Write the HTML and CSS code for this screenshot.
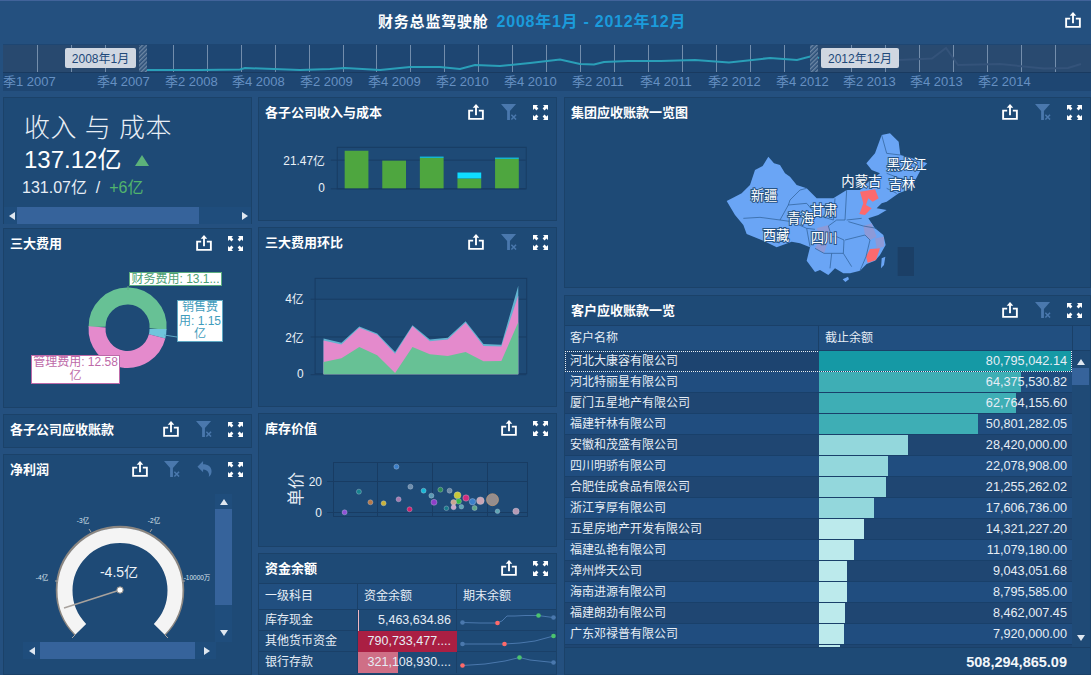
FILE: index.html
```html
<!DOCTYPE html>
<html lang="zh">
<head>
<meta charset="utf-8">
<title>财务总监驾驶舱</title>
<link rel="stylesheet" href="styles.css">
</head>
<body>
<svg class="defs" width="0" height="0">
  <defs>
    <symbol id="i-share" viewBox="0 0 17 17"><path d="M5.5 7H1.2V15.8H15.8V7H11.5M8.5 12V1.5" fill="none" stroke="#fff" stroke-width="2"/><path d="M8.5 0 12 4H5z" fill="#fff"/></symbol>
    <symbol id="i-filter" viewBox="0 0 17 17"><path d="M0 0H16L9.5 7.5V17H6.5V7.5z" fill="#4a78ad"/><path d="M11 11.5 16 16.5M16 11.5 11 16.5" stroke="#4a78ad" stroke-width="1.6"/></symbol>
    <symbol id="i-expand" viewBox="0 0 15 15"><path d="M0 0H5L3.6 1.6 5.4 3.4 3.4 5.4 1.6 3.6 0 5zM15 0H10L11.4 1.6 9.6 3.4 11.6 5.4 13.4 3.6 15 5zM0 15H5L3.6 13.4 5.4 11.6 3.4 9.6 1.6 11.4 0 10zM15 15H10L11.4 13.4 9.6 11.6 11.6 9.6 13.4 11.4 15 10z" fill="#fff"/></symbol>
    <symbol id="i-undo" viewBox="0 0 15 17"><path d="M0 6 6 0V3.5C11 3.5 15 6 15 11 15 13.5 14 15.5 12 17 13 14 12 9.5 6 9V12z" fill="#4a78ad"/></symbol>
    <pattern id="hatch" width="3" height="3" patternUnits="userSpaceOnUse" patternTransform="rotate(45)"><rect width="3" height="3" fill="#2b4f78"/><rect width="1.4" height="3" fill="#6d87a5"/></pattern>
  </defs>
</svg>
<div class="page">
  <header class="top">
    <span class="top-title">财务总监驾驶舱</span>
    <span class="top-date">2008年1月 - 2012年12月</span>
    <svg class="ico top-share"><use href="#i-share"/></svg>
  </header>

  <section class="timeline">
    <svg class="timeline-svg" viewBox="3 44 1088 47" width="1088" height="47">
      <rect x="3" y="45" width="136" height="27" fill="#28496f"/>
      <rect x="818" y="45" width="273" height="27" fill="#294a70"/>
      <g stroke="#8ea5c0" stroke-width="1" opacity=".75">
        <path d="M37.5 45V72M71.5 45V72M105.5 45V72M173.5 45V72M207.5 45V72M241.5 45V72M275.5 45V72M309.5 45V72M343.5 45V72M376.5 45V72M410.5 45V72M444.5 45V72M478.5 45V72M512.5 45V72M546.5 45V72M580.5 45V72M614.5 45V72M648.5 45V72M682.5 45V72M716.5 45V72M750.5 45V72M784.5 45V72M851.5 45V72M885.5 45V72M919.5 45V72M953.5 45V72M987.5 45V72M1021.5 45V72M1055.5 45V72"/>
      </g>
      <path d="M147 70 200 70 240 69.5 245 68 300 70 330 69 345 68 380 70 410 67 440 67 460 69 475 65 500 66 530 63 560 59.5 580 64 594 64.500 604 62 628 61 661 61 695 60 729 62.500 770 58 797 60 812 56 819 58" fill="none" stroke="#2a9fb8" stroke-width="2"/>
      <path d="M899 60 932 58.500 946 48 958 65 1000 64 1044 68.500 1068 68 1081 64" fill="none" stroke="#34537a" stroke-width="2"/>
      <rect x="139" y="45" width="8" height="27" fill="url(#hatch)"/>
      <rect x="810" y="45" width="8" height="27" fill="url(#hatch)"/>
      <rect x="65" y="48" width="71" height="20" rx="2" fill="#d0d7e1"/>
      <rect x="821" y="48" width="78" height="20" rx="2" fill="#d0d7e1"/>
      <text class="tl-tag" x="100.500" y="63" text-anchor="middle">2008年1月</text>
      <text class="tl-tag" x="860" y="63" text-anchor="middle">2012年12月</text>
      <path d="M3 72.500H1091" stroke="#193a60"/>
      <g class="tl-label">
        <text x="3" y="86">季1 2007</text><text x="97" y="86">季4 2007</text><text x="165" y="86">季2 2008</text><text x="232" y="86">季4 2008</text><text x="300" y="86">季2 2009</text><text x="368" y="86">季4 2009</text><text x="436" y="86">季2 2010</text><text x="504" y="86">季4 2010</text><text x="572" y="86">季2 2011</text><text x="640" y="86">季4 2011</text><text x="708" y="86">季2 2012</text><text x="776" y="86">季4 2012</text><text x="843" y="86">季2 2013</text><text x="910" y="86">季4 2013</text><text x="978" y="86">季2 2014</text>
      </g>
    </svg>
  </section>

  <main class="board">
    <div class="col col-a">
      <section class="panel p-income">
        <div class="income-body">
          <div class="income-head">收入 与 成本</div>
          <div class="income-main"><span>137.12亿</span><i class="tri-up"></i></div>
          <div class="income-sub">131.07亿 &nbsp;/ &nbsp;<em>+6亿</em></div>
        </div>
        <div class="hbar"><i class="arr arr-l"></i><b class="hbar-thumb income-thumb"></b><i class="arr arr-r"></i></div>
      </section>

      <section class="panel p-fee">
        <div class="title"><h2>三大费用</h2><div class="tools"><svg class="ico"><use href="#i-share"/></svg><svg class="ico exp"><use href="#i-expand"/></svg></div></div>
        <div class="fee-chart">
          <svg viewBox="4 256 247 150" width="247" height="150">
            <g fill="none" stroke-width="17">
              <path d="M97.100 324.900A30.500 30.500 0 1 1 158 327" stroke="#67c195"/>
              <path d="M158 327A30.500 30.500 0 0 1 157.100 334.400" stroke="#70c5dc"/>
              <path d="M157.100 334.400A30.500 30.500 0 0 1 97.100 324.900" stroke="#e48acc"/>
            </g>
            <path d="M128 288V284" stroke="#5cae7f"/><path d="M164 333 177 335" stroke="#5fa9c4"/>
          </svg>
          <div class="tip tip-fin">财务费用: 13.1...</div>
          <div class="tip tip-sale">销售费<br>用: 1.15<br>亿</div>
          <div class="tip tip-mgr">管理费用: 12.58<br>亿</div>
        </div>
      </section>

      <section class="panel p-ar">
        <div class="title"><h2>各子公司应收账款</h2><div class="tools"><svg class="ico"><use href="#i-share"/></svg><svg class="ico"><use href="#i-filter"/></svg><svg class="ico exp"><use href="#i-expand"/></svg></div></div>
      </section>

      <section class="panel p-profit">
        <div class="title"><h2>净利润</h2><div class="tools"><svg class="ico"><use href="#i-share"/></svg><svg class="ico"><use href="#i-filter"/></svg><svg class="ico undo"><use href="#i-undo"/></svg><svg class="ico exp"><use href="#i-expand"/></svg></div></div>
        <div class="gauge">
          <svg viewBox="4 482 247 190" width="247" height="190">
            <path d="M75.500 632.500A63 63 0 1 1 164.500 632.500" fill="none" stroke="#8b8681" stroke-width="2.500"/>
            <path d="M80.800 627.200A55 55 0 1 1 159.200 627.200" fill="none" stroke="#f4f4f4" stroke-width="15"/>
            <path d="M91 530 89 527M150 530 152 527M58 579H55M182 579H185M75 633 72 636M165 633 168 636" stroke="#a9a5a1"/>
            <g class="g-tick">
              <text x="83" y="521" text-anchor="middle">-3亿</text><text x="154" y="521" text-anchor="middle">-2亿</text><text x="42" y="578" text-anchor="middle">-4亿</text><text x="197" y="578" text-anchor="middle">-10000万</text>
            </g>
            <text class="g-val" x="119" y="575" text-anchor="middle">-4.5亿</text>
            <path d="M120 588 64 606" stroke="#a8a29d" stroke-width="1.500"/>
            <circle cx="120" cy="588" r="3.200" fill="#fff" stroke="#8b8681"/>
          </svg>
          <div class="vbar"><i class="arr arr-u"></i><b class="vbar-thumb"></b><i class="arr arr-d"></i></div>
          <div class="hbar gauge-h"><i class="arr arr-l"></i><b class="hbar-thumb gauge-thumb"></b><i class="arr arr-r"></i></div>
        </div>
      </section>
    </div>

    <div class="col col-b">
      <section class="panel p-rev">
        <div class="title"><h2>各子公司收入与成本</h2><div class="tools"><svg class="ico"><use href="#i-share"/></svg><svg class="ico"><use href="#i-filter"/></svg><svg class="ico exp"><use href="#i-expand"/></svg></div></div>
        <svg class="chart" viewBox="259 126 297 94" width="297" height="94">
          <rect x="336.500" y="146.500" width="191" height="42" fill="none" stroke="#183c63"/>
          <path d="M330 159.500H527M330 188.500H527" stroke="#183c63"/>
          <g fill="#4ea63f"><rect x="344" y="150" width="24" height="38"/><rect x="382" y="160" width="24" height="28"/><rect x="420" y="157" width="24" height="31"/><rect x="458" y="178" width="24" height="10"/><rect x="496" y="158" width="24" height="30"/></g>
          <g fill="#0fdcff"><rect x="420" y="156" width="24" height="1"/><rect x="458" y="172" width="24" height="6"/><rect x="496" y="157" width="24" height="1"/></g>
          <g class="axis"><text x="324" y="164" text-anchor="end">21.47亿</text><text x="324" y="192" text-anchor="end">0</text></g>
        </svg>
      </section>

      <section class="panel p-trend">
        <div class="title"><h2>三大费用环比</h2><div class="tools"><svg class="ico"><use href="#i-share"/></svg><svg class="ico"><use href="#i-filter"/></svg><svg class="ico exp"><use href="#i-expand"/></svg></div></div>
        <svg class="chart" viewBox="259 256 297 150" width="297" height="150">
          <rect x="314.500" y="277.500" width="213" height="96" fill="none" stroke="#183c63"/>
          <path d="M310 298.500H527M310 336.500H527M310 374.500H527" stroke="#183c63"/>
          <path d="M323 338 341 342.300 359 326 377 333 395 351.700 412.500 324.700 430 339 448 337.300 466 320.700 484 343.700 502 344.300 519 285V374H323z" fill="#63b3d0"/>
          <path d="M323 340 341 344 359 327.300 377 334.300 395 353.300 412.500 325.700 430 340.700 448 339 466 322.300 484 345.700 502 346 519 295V374H323z" fill="#e48acc"/>
          <path d="M323 361.700 341 358 359 346.700 377 355 395 372.700 412.500 346.700 430 354 448 355.700 466 351.700 484 361 502 360.700 519 321.700V374H323z" fill="#67c195"/>
          <g class="axis axis-lg"><text x="303" y="302" text-anchor="end">4亿</text><text x="303" y="342" text-anchor="end">2亿</text><text x="303" y="378" text-anchor="end">0</text></g>
        </svg>
      </section>

      <section class="panel p-stock">
        <div class="title"><h2>库存价值</h2><div class="tools"><svg class="ico"><use href="#i-share"/></svg><svg class="ico exp"><use href="#i-expand"/></svg></div></div>
        <svg class="chart" viewBox="259 443 297 103" width="297" height="103">
          <rect x="333.500" y="462.500" width="194" height="54" fill="none" stroke="#183c63"/>
          <path d="M377.500 462V516M432.500 462V516M487.500 462V516M327 481.500H527M327 512.500H527" stroke="#183c63"/>
          <g class="axis axis-lg"><text x="322" y="486" text-anchor="end">20</text><text x="322" y="517" text-anchor="end">0</text></g>
          <text class="unit" transform="translate(302 506) rotate(-90)">单价</text>
          <g stroke-opacity=".6" stroke="#c4d0dc" stroke-width=".6">
            <circle cx="396.400" cy="466.700" r="2.500" fill="#3b7fc9"/><circle cx="358.900" cy="491.700" r="2.500" fill="#17838f"/><circle cx="410.400" cy="486.700" r="2.500" fill="#6f8fae"/><circle cx="423.600" cy="490.700" r="2.500" fill="#17b7d6"/><circle cx="431.400" cy="495.700" r="2.500" fill="#5c9ab5"/><circle cx="440.400" cy="489.700" r="2.500" fill="#2e8b57"/><circle cx="449.600" cy="490.700" r="2.500" fill="#6d8aa5"/><circle cx="457.500" cy="495.300" r="3.500" fill="#c9c83a"/><circle cx="466" cy="498" r="3.200" fill="#d22d7c"/><circle cx="458.600" cy="501.300" r="2.800" fill="#36b84a"/><circle cx="453.600" cy="502.300" r="2.800" fill="#c9a592"/><circle cx="472.500" cy="501.700" r="3.200" fill="#3b7fc9"/><circle cx="480.400" cy="500.700" r="3.800" fill="#c9a5b5"/><circle cx="492.500" cy="499.700" r="6" fill="#958d8d" stroke="#d8a273" stroke-opacity="1"/><circle cx="370.400" cy="502.300" r="2.500" fill="#b5794a"/><circle cx="383.600" cy="503.300" r="2.500" fill="#c9b23a"/><circle cx="398.600" cy="499.300" r="2.500" fill="#a87ab0"/><circle cx="434" cy="502.300" r="3" fill="#8e3fc9"/><circle cx="409.600" cy="509.300" r="2.500" fill="#d2206c"/><circle cx="344.600" cy="512.300" r="2.500" fill="#8e52d6"/><circle cx="446.400" cy="508.300" r="2.300" fill="#177a8a"/><circle cx="453.600" cy="507.300" r="2.500" fill="#c9a5c9"/><circle cx="461.400" cy="506.700" r="2.300" fill="#5fa5b5"/><circle cx="474.600" cy="508" r="2.500" fill="#5fa58a"/><circle cx="497.500" cy="511.300" r="2.300" fill="#5fa5b5"/><circle cx="516" cy="511.300" r="3.200" fill="#b59ab5"/>
          </g>
        </svg>
      </section>

      <section class="panel p-fund">
        <div class="title"><h2>资金余额</h2><div class="tools"><svg class="ico"><use href="#i-share"/></svg><svg class="ico exp"><use href="#i-expand"/></svg></div></div>
        <div class="ftable">
          <div class="frow fhead"><div class="fc">一级科目</div><div class="fc">资金余额</div><div class="fc">期末余额</div></div>
          <div class="frow">
            <div class="fc">库存现金</div>
            <div class="fc fnum"><b class="fbar bar-pink" style="width:1px"></b><span>5,463,634.86</span></div>
            <div class="fc fspark"><svg viewBox="457 608 100 21" width="100" height="21"><path d="M462 620.500 480 621 497 621 502 619 507 614 515 614 525 613.500 538 613.500 553 615.500" fill="none" stroke="#4a78ad"/><circle cx="462.500" cy="620.500" r="2.300" fill="#4a78ad"/><circle cx="497.500" cy="621" r="2.300" fill="#ff6a6a"/><circle cx="538.500" cy="613.500" r="2.300" fill="#4cc36e"/><circle cx="553.500" cy="615.500" r="2.300" fill="#4a78ad"/></svg></div>
          </div>
          <div class="frow">
            <div class="fc">其他货币资金</div>
            <div class="fc fnum"><b class="fbar bar-red" style="width:99px"></b><span>790,733,477....</span></div>
            <div class="fc fspark"><svg viewBox="457 629 100 21" width="100" height="21"><path d="M462.500 642 504.500 642 520 641 535 639 553.500 634" fill="none" stroke="#4a78ad"/><circle cx="462.500" cy="642" r="2.300" fill="#4a78ad"/><circle cx="504.500" cy="642" r="2.300" fill="#ff6a6a"/><circle cx="553.500" cy="634" r="2.300" fill="#4cc36e"/></svg></div>
          </div>
          <div class="frow">
            <div class="fc">银行存款</div>
            <div class="fc fnum"><b class="fbar bar-rose" style="width:40px"></b><span>321,108,930....</span></div>
            <div class="fc fspark"><svg viewBox="457 650 100 21" width="100" height="21"><path d="M462.500 663.500 485 662 505 659 519.500 655.500 530 658 553.500 660.500" fill="none" stroke="#4a78ad"/><circle cx="462.500" cy="663.500" r="2.300" fill="#ff6a6a"/><circle cx="519.500" cy="655.500" r="2.300" fill="#4cc36e"/><circle cx="553.500" cy="660.500" r="2.300" fill="#4a78ad"/></svg></div>
          </div>
        </div>
      </section>
    </div>

    <div class="col col-c">
      <section class="panel p-map">
        <div class="title"><h2>集团应收账款一览图</h2><div class="tools"><svg class="ico"><use href="#i-share"/></svg><svg class="ico"><use href="#i-filter"/></svg><svg class="ico exp"><use href="#i-expand"/></svg></div></div>
        <div class="map-wrap">
          <svg viewBox="0 0 750 450" width="250" height="150">
            <rect x="593" y="321" width="49" height="87" fill="#1b3f66"/>
            <path d="M80 183 105 170 125 160 150 135 165 90 188 78 205 50 222 70 240 75 255 100 270 110 290 135 320 145 350 175 400 175 440 150 480 150 505 125 540 100 515 90 499 70 525 40 545 -15 570 -20 596 5 601 45 637 55 682 70 662 90 646 120 636 145 596 160 560 185 545 190 530 205 560 210 535 225 505 235 525 265 550 285 557 315 540 345 525 362 500 372 480 392 450 400 430 400 405 385 385 405 360 390 345 396 320 362 330 322 300 310 275 305 230 322 190 302 140 282 130 255 105 225z" fill="#6aa5f5"/>
            <path d="M545 355 556 350 552 375 543 385z" fill="#6aa5f5"/><path d="M428 418 444 410 447 418 436 426z" fill="#6aa5f5"/>
            <path d="M350 265 385 255 392 285 372 340 345 325 362 290z" fill="#8d9ad8"/>
            <path d="M490 258 515 250 530 290 510 300 495 285z" fill="#8d9ad8"/><path d="M525 295 552 290 552 320 530 325z" fill="#8d9ad8"/>
            <path d="M480 155 525 148 536 175 518 185 505 175 498 195 515 205 495 225 478 222 490 190z" fill="#fb6a6e"/><path d="M510 327 540 325 528 360 503 368 498 350z" fill="#fb6a6e"/>
            <path d="M130 235 180 232 240 240 275 245 320 265 345 268M265 195 270 180 300 150 320 145M240 240 265 195 320 190 350 225 400 240 405 175M320 265 330 320M345 325 372 340 395 340 430 340 432 300 410 290 395 290 385 258 410 240 435 240 440 150M440 240 485 235M435 300 495 285 510 300 498 350 480 392M430 340 455 380M395 340 390 385M560 100 600 115 646 120M560 145 590 160M545 -15 560 40 601 45M445 245 490 258 530 265" fill="none" stroke="#2b5a8f" stroke-width="2"/>
            <g class="map-label">
              <text x="152" y="180">新疆</text><text x="188" y="300">西藏</text><text x="262" y="249">青海</text><text x="332" y="225">甘肃</text><text x="332" y="310">四川</text><text x="424" y="138">内蒙古</text><text x="560" y="87">黑龙江</text><text x="566" y="146">吉林</text>
            </g>
          </svg>
        </div>
      </section>

      <section class="panel p-client">
        <div class="title"><h2>客户应收账款一览</h2><div class="tools"><svg class="ico"><use href="#i-share"/></svg><svg class="ico"><use href="#i-filter"/></svg><svg class="ico exp"><use href="#i-expand"/></svg></div></div>
        <div class="chead"><div class="cname">客户名称</div><div class="cval">截止余额</div><div class="cside"></div></div>
        <div class="cbody">
          <div class="crows">
            <div class="crow focus"><div class="cname">河北大康容有限公司</div><div class="cval"><b class="cbar c1" style="width:252px"></b><span>80,795,042.14</span></div></div>
            <div class="crow"><div class="cname">河北特丽星有限公司</div><div class="cval"><b class="cbar c2" style="width:202px"></b><span>64,375,530.82</span></div></div>
            <div class="crow"><div class="cname">厦门五星地产有限公司</div><div class="cval"><b class="cbar c2" style="width:197px"></b><span>62,764,155.60</span></div></div>
            <div class="crow"><div class="cname">福建轩林有限公司</div><div class="cval"><b class="cbar c2" style="width:159px"></b><span>50,801,282.05</span></div></div>
            <div class="crow"><div class="cname">安徽和茂盛有限公司</div><div class="cval"><b class="cbar c3" style="width:89px"></b><span>28,420,000.00</span></div></div>
            <div class="crow"><div class="cname">四川明骄有限公司</div><div class="cval"><b class="cbar c3" style="width:69px"></b><span>22,078,908.00</span></div></div>
            <div class="crow"><div class="cname">合肥佳成食品有限公司</div><div class="cval"><b class="cbar c3" style="width:67px"></b><span>21,255,262.02</span></div></div>
            <div class="crow"><div class="cname">浙江亨厚有限公司</div><div class="cval"><b class="cbar c3" style="width:55px"></b><span>17,606,736.00</span></div></div>
            <div class="crow"><div class="cname">五星房地产开发有限公司</div><div class="cval"><b class="cbar c4" style="width:45px"></b><span>14,321,227.20</span></div></div>
            <div class="crow"><div class="cname">福建弘艳有限公司</div><div class="cval"><b class="cbar c4" style="width:35px"></b><span>11,079,180.00</span></div></div>
            <div class="crow"><div class="cname">漳州烨天公司</div><div class="cval"><b class="cbar c4" style="width:28px"></b><span>9,043,051.68</span></div></div>
            <div class="crow"><div class="cname">海南进源有限公司</div><div class="cval"><b class="cbar c4" style="width:28px"></b><span>8,795,585.00</span></div></div>
            <div class="crow"><div class="cname">福建朗劲有限公司</div><div class="cval"><b class="cbar c4" style="width:26px"></b><span>8,462,007.45</span></div></div>
            <div class="crow"><div class="cname">广东邓禄普有限公司</div><div class="cval"><b class="cbar c4" style="width:25px"></b><span>7,920,000.00</span></div></div>
            <div class="crow"><div class="cname"></div><div class="cval"><b class="cbar c4" style="width:21px"></b></div></div>
          </div>
          <div class="vbar client-v"><i class="arr arr-u"></i><b class="client-thumb"></b><i class="arr arr-d arr-end"></i></div>
        </div>
        <div class="cfoot">508,294,865.09</div>
      </section>
    </div>
  </main>
</div>
</body>
</html>
```

FILE: styles.css
```css
* { box-sizing: border-box; }
html, body { margin: 0; padding: 0; }
body {
  width: 1091px; height: 675px; overflow: hidden;
  background: #24507f; color: #e6edf5;
  font-family: "Liberation Sans", "Noto Sans CJK SC", sans-serif;
  font-size: 12px;
}
.defs { position: absolute; }
.page { width: 1091px; height: 675px; border-top: 1px solid #41639a; display: flex; flex-direction: column; }

.top { height: 43px; display: flex; align-items: center; padding: 0 10px 5px 378px; flex: none; }
.top-title { color: #fff; font-weight: 700; font-size: 15px; letter-spacing: .8px; }
.top-date { color: #1b9bdb; font-weight: 700; font-size: 16px; letter-spacing: .75px; margin-left: 8px; }
.ico { width: 16px; height: 16px; display: block; flex: none; }
.top-share { margin-left: auto; }

.timeline { margin-left: 3px; height: 47px; flex: none; background: #1e4672; }
.timeline-svg { display: block; }
.tl-tag { fill: #21497a; font-size: 12px; }
.tl-label text { fill: #6690c2; font-size: 13px; }

.board { flex: 1; display: flex; padding: 6px 0 0 3px; min-height: 0; }
.col { display: flex; flex-direction: column; gap: 6px; }
.col-a { width: 249px; margin-right: 6px; }
.col-b { width: 299px; margin-right: 7px; }
.col-c { width: 527px; gap: 7px; }

.panel { background: #1e4a76; border: 1px solid #1b4269; display: flex; flex-direction: column; overflow: hidden; flex: none; }
.p-income { height: 127px; border-bottom: 0; margin-bottom: -2px; }
.p-fee { height: 180px; }
.p-ar { height: 34px; }
.p-profit { flex: 1; }
.p-rev { height: 124px; }
.p-trend { height: 180px; }
.p-stock { height: 134px; }
.p-fund { flex: 1; }
.p-map { height: 191px; }
.p-client { flex: 1; }

.title { height: 29px; flex: none; display: flex; align-items: center; justify-content: space-between; padding: 0 8px 0 6px; }
.title h2 { margin: 0; font-size: 13px; font-weight: 700; color: #fff; line-height: 1; }
.tools { display: flex; align-items: center; gap: 16.5px; margin-top: -1px; }
.tools .exp { width: 15px; height: 15px; }
.tools .undo { width: 15px; }

.chart { display: block; }

.income-body { flex: 1; padding: 14px 0 0 20px; }
.income-head { font-size: 26px; line-height: 32px; color: #e8eef5; font-weight: 300; letter-spacing: .5px; }
.income-main { font-size: 24px; line-height: 32px; color: #fff; display: flex; align-items: center; gap: 14px; }
.tri-up { width: 0; height: 0; border-left: 7px solid transparent; border-right: 7px solid transparent; border-bottom: 11px solid #5cb27a; }
.income-sub { font-size: 16px; line-height: 24px; margin-left: -2px; }
.income-sub em { font-style: normal; color: #52b56c; }

.hbar { height: 17px; flex: none; display: flex; align-items: center; background: #1f4d7c; }
.hbar-thumb { display: block; height: 17px; background: #36639b; }
.income-thumb { width: 182px; margin: 0 auto 0 2px; }
.arr { width: 0; height: 0; display: block; flex: none; border: 4px solid transparent; }
.arr-l { border-right: 6px solid #dfe7f0; border-left: 0; margin-left: 5px; }
.arr-r { border-left: 6px solid #dfe7f0; border-right: 0; margin-right: 3px; }
.arr-u { border-bottom: 6px solid #dfe7f0; border-top: 0; }
.arr-d { border-top: 6px solid #dfe7f0; border-bottom: 0; }

.fee-chart { position: relative; height: 150px; }
.fee-chart svg { display: block; }
.tip { position: absolute; background: #fff; border: 1px solid; font-size: 12px; line-height: 13.500px; text-align: center; white-space: nowrap; overflow: hidden; }
.tip-fin { left: 125px; top: 14px; width: 93px; height: 14px; line-height: 12px; color: #4d9f74; border-color: #5cae7f; }
.tip-sale { left: 173px; top: 42px; width: 46px; height: 42px; color: #3f9cbc; border-color: #5fa9c4; }
.tip-mgr { left: 27px; top: 97px; width: 89px; height: 29px; color: #bd6aa8; border-color: #bd6aa8; }

.gauge { position: relative; flex: 1; }
.gauge svg { display: block; }
.g-tick text { fill: #dbe3ec; font-size: 6.500px; }
.g-val { fill: #eef3f8; font-size: 14px; }
.vbar { position: absolute; left: 211px; top: 10px; width: 17px; height: 148px; background: #1f4d7c; display: flex; flex-direction: column; align-items: center; padding-top: 5px; justify-content: flex-start; }
.vbar-thumb { display: block; width: 17px; height: 96px; margin: 4px 0 auto; background: #36639b; }
.vbar .arr-d { margin-bottom: 6px; }
.gauge-h { position: absolute; left: 19px; top: 158px; width: 193px; }
.gauge-thumb { width: 155px; margin: 0 auto 0 5px; }
.gauge-h .arr-l { margin-left: 6px; }
.gauge-h .arr-r { margin-right: 6px; }

.axis text { fill: #eaf0f7; font-size: 12px; }
.axis-lg text { font-size: 12px; }
.unit { fill: #e6edf5; font-size: 17px; }

.ftable { display: flex; flex-direction: column; }
.frow { display: grid; grid-template-columns: 99px 99px 1fr; height: 21px; border-top: 1px solid #1a4068; }
.fhead { height: 26px; background: #214f80; }
.fc { padding: 0 0 0 6px; line-height: 20px; font-size: 12px; border-right: 1px solid #1a4068; white-space: nowrap; position: relative; }
.fhead .fc { line-height: 25px; }
.fc:last-child { border-right: 0; }
.fnum { padding: 0 5px 0 0; text-align: right; font-size: 12.500px; }
.fnum span { position: relative; }
.fbar { position: absolute; left: 0; top: 0; bottom: 0; }
.bar-pink { background: #f0b7c2; }
.bar-red { background: #aa1f43; }
.bar-rose { background: #cf6f86; }
.fspark { padding: 0; }
.fspark svg { display: block; }

.map-wrap { padding: 13px 0 0 135px; height: 160px; }
.map-wrap svg { display: block; overflow: visible; }
.map-label text { fill: #fff; font-size: 40px; stroke: #1e4a76; stroke-width: 6px; paint-order: stroke; stroke-opacity: .9; }

.chead { display: flex; height: 26px; flex: none; background: #214f80; border-top: 1px solid #1a4068; border-bottom: 1px solid #1a4068; }
.chead .cname, .chead .cval { line-height: 24px; }
.cname { width: 254px; flex: none; padding-left: 5px; border-right: 1px solid #1a4068; white-space: nowrap; }
.cval { width: 253px; flex: none; position: relative; padding-right: 5px; text-align: right; }
.chead .cval { text-align: left; padding-left: 6px; }
.cside { flex: 1; border-left: 1px solid #1a4068; }
.cbody { display: flex; height: 296px; overflow: hidden; flex: none; position: relative; }
.crows { width: 507px; flex: none; }
.crow { display: flex; height: 21px; line-height: 21px; background: #1f4672; border-bottom: 1px solid #19406a; }
.crow:nth-child(even) { background: #204d7f; }
.crow .cname { border-right: 0; }
.crow .cval { font-size: 12.700px; }
.crow .cval span { position: relative; }
.crow.focus { outline: 1px dotted #e8eef5; outline-offset: -1px; background: #1d4470; }
.cbar { position: absolute; left: 0; top: 0; bottom: 0; }
.c1 { background: #1599a5; }
.c2 { background: #3eaeb5; }
.c3 { background: #93d7dc; }
.c4 { background: #bceaec; }
.client-v { position: static; width: 17px; height: 296px; margin-left: 0; padding-top: 8px; background: #1f4a76; }
.client-thumb { display: block; width: 17px; height: 17px; margin-top: 3px; background: #36639b; }
.arr-end { margin-top: auto; }
.cfoot { flex: 1; text-align: right; font-weight: 700; font-size: 14.500px; padding: 6px 23px 0 0; border-top: 1px solid #1a4068; color: #f2f6fa; }
```
